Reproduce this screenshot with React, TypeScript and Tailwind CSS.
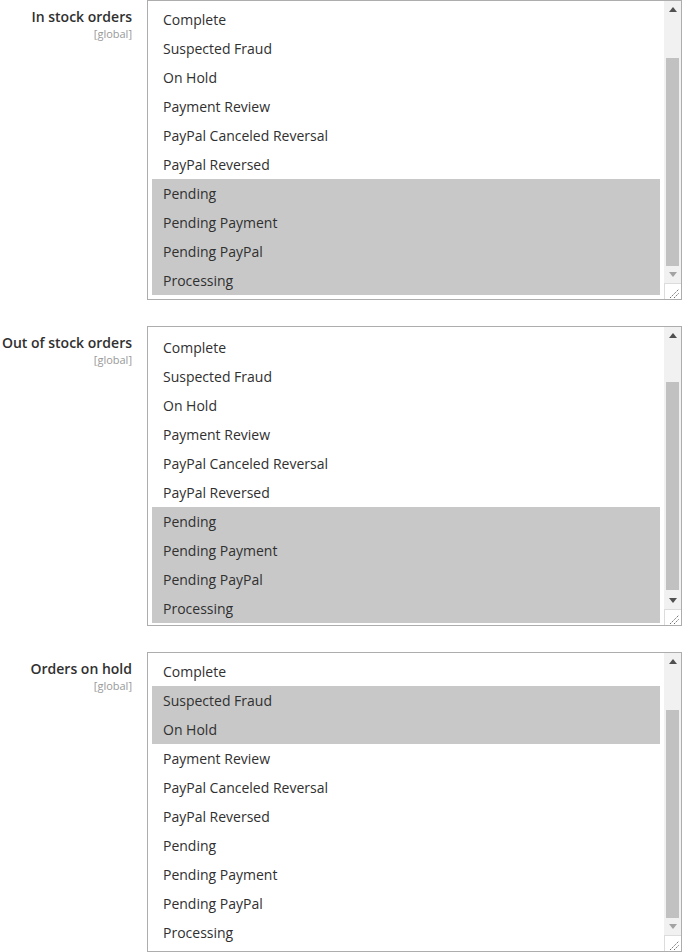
const statuses = [
  "Complete",
  "Suspected Fraud",
  "On Hold",
  "Payment Review",
  "PayPal Canceled Reversal",
  "PayPal Reversed",
  "Pending",
  "Pending Payment",
  "Pending PayPal",
  "Processing",
];

const fields = [
  {
    label: "In stock orders",
    selected: ["Pending", "Pending Payment", "Pending PayPal", "Processing"],
    atEnd: true,
  },
  {
    label: "Out of stock orders",
    selected: ["Pending", "Pending Payment", "Pending PayPal", "Processing"],
    atEnd: false,
  },
  {
    label: "Orders on hold",
    selected: ["Suspected Fraud", "On Hold"],
    atEnd: true,
  },
];

function Scrollbar({ atEnd }: { atEnd: boolean }) {
  return (
    <div className="flex w-[17px] flex-col bg-[#f1f1f1]">
      {/* up arrow */}
      <div className="flex h-[17px] items-center justify-center">
        <svg width="8" height="5" viewBox="0 0 8 5">
          <path d="M0 5 L4 0 L8 5 Z" fill="#505050" />
        </svg>
      </div>
      <div className="flex flex-1 flex-col px-[2px]">
        <div className={atEnd ? "h-[40px]" : "h-[38px]"} />
        <div className={atEnd ? "flex-1 bg-[#c1c1c1]" : "mb-[2px] flex-1 bg-[#c1c1c1]"} />
      </div>
      {/* down arrow */}
      <div className="flex h-[17px] items-center justify-center">
        <svg width="8" height="5" viewBox="0 0 8 5">
          <path d="M0 0 L8 0 L4 5 Z" fill={atEnd ? "#a3a3a3" : "#505050"} />
        </svg>
      </div>
      {/* resizer */}
      <div className="h-[16px] border-t border-l border-[#dcdcdc] bg-white">
        <svg width="16" height="16" viewBox="0 0 16 16">
          <path d="M5 14 L14 5 M9 14 L14 9" stroke="#6b6b6b" strokeWidth="1" strokeDasharray="1.5 1" />
        </svg>
      </div>
    </div>
  );
}

function StatusSelect({ selected, atEnd }: { selected: string[]; atEnd: boolean }) {
  return (
    <div className="flex h-[300px] w-[535px] overflow-hidden border border-[#adadad] bg-white">
      <div className={atEnd ? "flex-1 p-[4px]" : "flex-1 px-[4px] pt-[6px]"}>
        {statuses.map((s) => (
          <div
            key={s}
            className={`flex h-[29px] items-center px-[11px] text-[14px] text-[#303030] ${
              selected.includes(s) ? "bg-[#c8c8c8]" : ""
            }`}
          >
            {s}
          </div>
        ))}
      </div>
      <Scrollbar atEnd={atEnd} />
    </div>
  );
}

export default function App() {
  return (
    <div
      className="flex w-[682px] flex-col gap-[26px] bg-white"
      style={{ fontFamily: '"Open Sans", "Liberation Sans", sans-serif' }}
    >
      {fields.map((f) => (
        <div key={f.label} className="flex">
          <div className="w-[132px] pt-[7px] text-right">
            <div className="text-[14px] font-semibold leading-[19px] text-[#303030]">{f.label}</div>
            <div className="text-[11px] leading-[15px] text-[#999999]">[global]</div>
          </div>
          <div className="ml-[15px]">
            <StatusSelect selected={f.selected} atEnd={f.atEnd} />
          </div>
        </div>
      ))}
    </div>
  );
}
